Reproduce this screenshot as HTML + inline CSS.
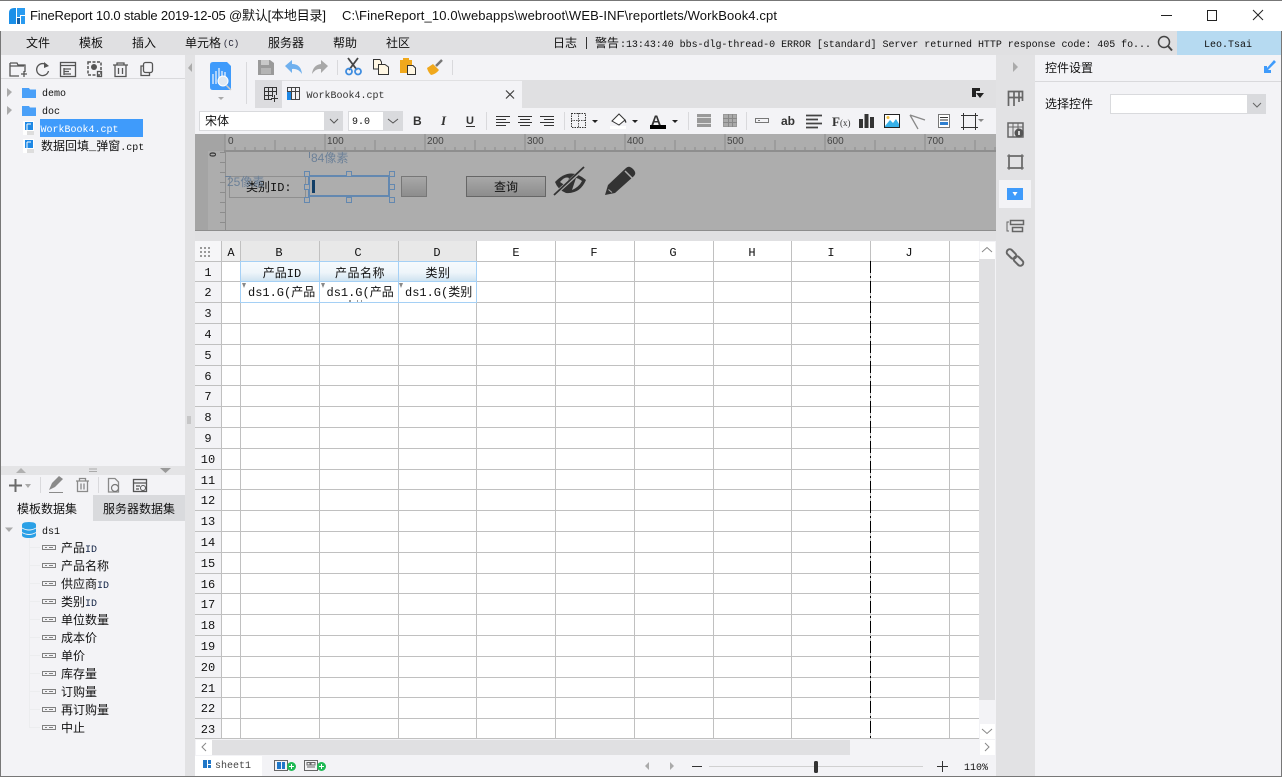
<!DOCTYPE html>
<html><head><meta charset="utf-8">
<style>
html,body{margin:0;padding:0;width:1282px;height:777px;overflow:hidden;background:#fff}
svg{display:block}
text{font-family:"Liberation Sans","Noto Sans CJK SC",sans-serif;font-size:12px;fill:#111}
.m{font-family:"Liberation Mono","Noto Sans CJK SC",monospace}
.c{font-family:"Liberation Mono","WenQuanYi Zen Hei","Noto Sans CJK SC",monospace}
.z{font-family:"WenQuanYi Zen Hei","Noto Sans CJK SC",sans-serif}
.mid{text-anchor:middle}
.ic{fill:none;stroke:#555;stroke-width:1.3}
.ig{fill:none;stroke:#8a8a8a;stroke-width:1.3}
</style></head><body>
<svg width="1282" height="777" viewBox="0 0 1282 777" xmlns="http://www.w3.org/2000/svg">
<defs>
<pattern id="t10" x="224.5" y="134" width="100" height="17" patternUnits="userSpaceOnUse">
<path d="M.5 0V17M50.5 6V17M10.5 13V17M20.5 13V17M30.5 13V17M40.5 13V17M60.5 13V17M70.5 13V17M80.5 13V17M90.5 13V17" stroke="#8c8c8c" stroke-width="1" fill="none"/>
</pattern>
<pattern id="v10" x="208" y="152" width="17" height="10" patternUnits="userSpaceOnUse">
<path d="M12 .5H17" stroke="#8c8c8c" fill="none"/>
</pattern>
<linearGradient id="h1" x1="0" y1="0" x2="0" y2="1"><stop offset="0" stop-color="#f6fafd"/><stop offset=".55" stop-color="#eef5fa"/><stop offset="1" stop-color="#cfe3f0"/></linearGradient>
<linearGradient id="b1" x1="0" y1="0" x2="0" y2="1"><stop offset="0" stop-color="#a9a9a9"/><stop offset="1" stop-color="#8c8c8c"/></linearGradient>
</defs>

<!-- window base -->
<rect width="1282" height="777" fill="#f3f3f6"/>
<rect width="1282" height="31" fill="#fff"/>
<rect width="1282" height="1" fill="#777"/>
<!-- logo -->
<path d="M9 13 Q9 8 14 8H16V24H9Z" fill="#1b8fe8"/>
<path d="M17 8H25V15H20V17H17Z" fill="#2a9bf0"/>
<path d="M17 18H20V24H17Z" fill="#1560a8"/>
<path d="M21 16H25V24H21Z" fill="#2a9bf0"/>
<text x="30" y="20" style="font-size:13px" textLength="296" lengthAdjust="spacing">FineReport 10.0 stable 2019-12-05 @默认[本地目录]</text>
<text x="342" y="20" style="font-size:13px" textLength="435" lengthAdjust="spacing">C:\FineReport_10.0\webapps\webroot\WEB-INF\reportlets/WorkBook4.cpt</text>
<path d="M1161 15.500H1172" stroke="#222" stroke-width="1"/>
<rect x="1207.500" y="10.500" width="9" height="10" fill="none" stroke="#222"/>
<path d="M1253 10L1263 20M1263 10L1253 20" stroke="#222" stroke-width="1"/>

<!-- menu -->
<rect y="31" width="1282" height="24" fill="#e0e0e2"/>
<g class="z">
<text class="z" x="26" y="47">文件</text>
<text class="z" x="79" y="47">模板</text>
<text class="z" x="132" y="47">插入</text>
<text class="z" x="185" y="47">单元格</text>
<text class="m" x="223" y="46" style="font-size:9px;fill:#223">(C)</text>
<text class="z" x="268" y="47">服务器</text>
<text class="z" x="333" y="47">帮助</text>
<text class="z" x="386" y="47">社区</text>
<text class="z" x="553" y="47">日志</text>
<path d="M586.500 37V49" stroke="#333"/>
<text class="z" x="595" y="47">警告</text>
<text class="m" x="620" y="47" style="font-size:10px" textLength="531" lengthAdjust="spacing">:13:43:40 bbs-dlg-thread-0 ERROR [standard] Server returned HTTP response code: 405 fo...</text>
</g>
<circle cx="1164" cy="42" r="5.500" fill="none" stroke="#444" stroke-width="1.500"/>
<path d="M1168 46L1172 50.500" stroke="#444" stroke-width="2"/>
<rect x="1177" y="31" width="105" height="24" fill="#b6daf1"/>
<text class="m mid" x="1228" y="47" style="font-size:10px">Leo.Tsai</text>

<!-- left panel -->
<rect x="0" y="31" width="1" height="746" fill="#777"/>
<rect x="185" y="55" width="10" height="722" fill="#e2e2e4"/>
<path d="M188 68L192 63V72Z" fill="#aaa"/>
<path d="M188 416V424M190 416V424" stroke="#aaa" stroke-width="1"/>
<rect x="1" y="78" width="184" height="1" fill="#d9d9dc"/>
<!-- left toolbar icons -->
<path class="ic" d="M10 63H17L18 65H25V72M10 63V76H19M10 66H24M21 74H27M24 71V77"/>
<path class="ic" d="M47.500 66A6 6 0 1 0 48.500 71" stroke-width="1.700"/><path d="M44 62L49 66L44 68Z" fill="#555"/>
<rect class="ic" x="60.500" y="62.500" width="15" height="14"/><path class="ic" d="M60 65.500H76M64 69H71M64 71.500H69M64 74H71M64 68V75"/>
<rect x="88" y="62" width="13" height="13" fill="none" stroke="#555" stroke-dasharray="3 1.500" stroke-width="1.500"/><circle cx="94" cy="67" r="3" fill="#555"/><rect class="ic" x="97.500" y="71.500" width="4" height="5"/>
<path class="ic" d="M113 65H128M117 65V63H124V65M115 65V76.500H126V65M118.500 68V74M122.500 68V74"/>
<rect class="ic" x="143.500" y="62.500" width="9" height="10" rx="2"/><path class="ic" d="M143 66H141V75.500H149.500V73"/>

<!-- tree -->
<path d="M7 88L12 92L7 97Z" fill="#aaa"/><path d="M7 106L12 110L7 115Z" fill="#aaa"/>
<path d="M22 88H29L30 89.500H36V98H22Z" fill="#4aa0f8"/><path d="M22 106H29L30 107.500H36V116H22Z" fill="#4aa0f8"/>
<text class="m" x="42" y="96" style="font-size:10px">demo</text>
<text class="m" x="42" y="114" style="font-size:10px">doc</text>
<rect x="40" y="119" width="103" height="18" fill="#3f9bfb"/>
<rect x="23" y="121" width="11" height="14" fill="#fff"/><rect x="25" y="122" width="8" height="8" fill="#1e88e5"/><path d="M27 124H31M27 124V130" stroke="#fff"/><rect x="27" y="131" width="7" height="4" fill="#ddd"/>
<rect x="23" y="139" width="11" height="14" fill="#fff"/><rect x="25" y="140" width="8" height="8" fill="#1e88e5"/><path d="M27 142H31M27 142V148" stroke="#fff"/><rect x="27" y="149" width="7" height="4" fill="#ddd"/>
<text class="m" x="40.500" y="132" style="font-size:10px;fill:#fff">WorkBook4.cpt</text>
<text class="c" x="41" y="150">数据回填_弹窗<tspan style="font-size:10px">.cpt</tspan></text>

<!-- left lower -->
<rect x="1" y="466" width="184" height="9" fill="#e4e4e6"/>
<path d="M16 473L21 468L26 473Z" fill="#b0b0b0"/><path d="M160 468H171L165.500 473Z" fill="#999"/>
<path d="M89 469H97M89 471.500H97" stroke="#aaa"/>
<path d="M9 485.500H22M15.500 479V492" stroke="#6a6a6a" stroke-width="2"/><path d="M25 484H31L28 488Z" fill="#aaa"/>
<path d="M40.500 477V493M98.500 477V493" stroke="#d9d9dc"/>
<path d="M49 490L52 483L59 476L63 479L55 487Z" fill="#8a8a8a"/><path d="M49 492.500H63" stroke="#8a8a8a"/>
<path class="ig" d="M76 481H89M79.500 481V478.500H85.500V481M77.500 481V491.500H87.500V481M81 483.500V489.500M84 483.500V489.500"/>
<path class="ig" d="M108.500 492V478.500H115L118.500 482V492Z"/><circle cx="115" cy="488" r="3.500" fill="#f3f3f6" stroke="#777" stroke-width="1.200"/>
<rect class="ic" x="133.500" y="479.500" width="13" height="12"/><path class="ic" d="M133 483H146M136 486H140M136 489H139"/><circle cx="143" cy="488" r="2.500" fill="none" stroke="#555"/>
<rect x="1" y="495" width="184" height="26" fill="#f3f3f6"/>
<rect x="93" y="495" width="92" height="26" fill="#d9dadd"/>
<text class="z" x="17" y="513">模板数据集</text>
<text class="z" x="103" y="513">服务器数据集</text>
<path d="M5 527.500H13L9 532Z" fill="#aaa"/>
<path d="M22 525Q22 522 29 522Q36 522 36 525V535Q36 538 29 538Q22 538 22 535Z" fill="#2aa0e6"/>
<path d="M22 528Q29 532 36 528M22 532.500Q29 536.500 36 532.500" stroke="#f3f3f6" fill="none"/>
<text class="m" x="42" y="534" style="font-size:10px">ds1</text>
<g fill="none" stroke="#ecedef"><path d="M29.500 538V728M29 547.500H40M29 565.500H40M29 583.500H40M29 601.500H40M29 619.500H40M29 637.500H40M29 655.500H40M29 673.500H40M29 691.500H40M29 709.500H40M29 727.500H40"/></g>
<g fill="none" stroke="#808080">
<rect x="42.500" y="545.500" width="13" height="4"/><rect x="42.500" y="563.500" width="13" height="4"/><rect x="42.500" y="581.500" width="13" height="4"/><rect x="42.500" y="599.500" width="13" height="4"/><rect x="42.500" y="617.500" width="13" height="4"/><rect x="42.500" y="635.500" width="13" height="4"/><rect x="42.500" y="653.500" width="13" height="4"/><rect x="42.500" y="671.500" width="13" height="4"/><rect x="42.500" y="689.500" width="13" height="4"/><rect x="42.500" y="707.500" width="13" height="4"/><rect x="42.500" y="725.500" width="13" height="4"/>
<path d="M45 547.500H47M49 547.500H53M45 565.500H47M49 565.500H53M45 583.500H47M49 583.500H53M45 601.500H47M49 601.500H53M45 619.500H47M49 619.500H53M45 637.500H47M49 637.500H53M45 655.500H47M49 655.500H53M45 673.500H47M49 673.500H53M45 691.500H47M49 691.500H53M45 709.500H47M49 709.500H53M45 727.500H47M49 727.500H53"/>
</g>
<text class="z" x="61" y="552">产品<tspan style="font-family:'Liberation Mono';font-size:10px;fill:#124">ID</tspan></text>
<text class="z" x="61" y="570">产品名称</text>
<text class="z" x="61" y="588">供应商<tspan style="font-family:'Liberation Mono';font-size:10px;fill:#124">ID</tspan></text>
<text class="z" x="61" y="606">类别<tspan style="font-family:'Liberation Mono';font-size:10px;fill:#124">ID</tspan></text>
<text class="z" x="61" y="624">单位数量</text>
<text class="z" x="61" y="642">成本价</text>
<text class="z" x="61" y="660">单价</text>
<text class="z" x="61" y="678">库存量</text>
<text class="z" x="61" y="696">订购量</text>
<text class="z" x="61" y="714">再订购量</text>
<text class="z" x="61" y="732">中止</text>

<!-- main toolbar -->
<rect x="195" y="55" width="801" height="25" fill="#f3f3f6"/>
<path d="M210 65Q210 62 213 62H227L231 66V90H213Q210 90 210 87Z" fill="#3f9bfb"/>
<path d="M213 74V84M216 71V84M219 68V84M222 71V78M225 72V78" stroke="#e6f1fd" stroke-width="1.300"/>
<circle cx="223" cy="81" r="5" fill="#dfe9f2" stroke="#fff"/><path d="M226 85L231 90" stroke="#ccc" stroke-width="1.500"/>
<path d="M218 97H224L221 100Z" fill="#aaa"/>
<path d="M246.500 62V104" stroke="#d9d9dc"/>
<path d="M258 60H270L274 63V75H258Z" fill="#9a9a9a"/><rect x="261" y="60" width="8" height="5" fill="#c8c8c8"/><rect x="261" y="68" width="10" height="6" fill="#b4b4b4"/>
<path d="M285 66L292 60V64Q301 64 302 74Q298 68 292 69V73Z" fill="#6fb0ee"/>
<path d="M328 66L321 60V64Q313 65 312 74Q316 68 321 69V73Z" fill="#a8a8a8"/>
<path d="M337.500 60V75" stroke="#d9d9dc"/>
<path d="M348 58L357 70M358 58L349 70" stroke="#444" stroke-width="1.800"/>
<circle cx="349" cy="71.500" r="3" fill="none" stroke="#3f8de0" stroke-width="1.800"/><circle cx="358" cy="71.500" r="3" fill="none" stroke="#3f8de0" stroke-width="1.800"/>
<path d="M373.500 59.500H380L381.500 62V69H373.500Z" fill="#fff7e4" stroke="#333"/><path d="M378.500 64.500H385L388.500 67V74.500H378.500Z" fill="#fff7e4" stroke="#333"/>
<rect x="400" y="60" width="12" height="13" fill="#f0a81c"/><rect x="403" y="58" width="6" height="3" fill="#f0a81c"/>
<path d="M407.500 65.500H413L415.500 68V74.500H407.500Z" fill="#fff7e4" stroke="#333"/>
<path d="M427 68L433 64L439 70Q436 74 431 75Q428 72 427 68Z" fill="#f0a81c"/><path d="M436 66L442 60" stroke="#777" stroke-width="2.500"/>
<path d="M452.500 60V75" stroke="#d9d9dc"/>

<!-- tab row -->
<rect x="255" y="80" width="741" height="28" fill="#e0e0e2"/>
<rect x="255" y="80" width="27" height="28" fill="#dcdcdf"/>
<rect x="282" y="81" width="240" height="27" fill="#f3f3f6"/>
<path d="M264.500 87.500H277M264.500 87.500V99.500H272M264.500 91.500H277M264.500 95.500H272M268.500 87.500V99.500M272.500 87.500V97M276.500 87.500V95M271 98.500H278M274.500 95V102" stroke="#333" fill="none"/>
<rect x="287.500" y="87.500" width="12" height="12" fill="none" stroke="#444"/><path d="M287 91.500H300M291.500 87V100M295.500 87V100" stroke="#444"/><rect x="287" y="92" width="4" height="8" fill="#1e88e5"/>
<text class="m" x="306.500" y="98" style="font-size:10px;fill:#333">WorkBook4.cpt</text>
<path d="M506 90.500L514 98.500M514 90.500L506 98.500" stroke="#444" stroke-width="1.200"/>
<path d="M972 88H980V91H976V97H972Z" fill="#222"/><path d="M976 93H984L980 98Z" fill="#222"/>

<!-- format row -->
<rect x="195" y="108" width="801" height="26" fill="#f3f3f6"/>
<rect x="199" y="111" width="144" height="20" fill="#d9dadd"/><rect x="200" y="112" width="124" height="18" fill="#fff"/>
<text class="c" x="205" y="125">宋体</text>
<path d="M330 119L334 123L338 119" fill="none" stroke="#555"/>
<rect x="348" y="111" width="55" height="20" fill="#d9dadd"/><rect x="349" y="112" width="34" height="18" fill="#fff"/>
<text class="m" x="352" y="124" style="font-size:10px">9.0</text>
<path d="M388 119L393 123L398 119" fill="none" stroke="#555"/>
<text x="413" y="125" style="font-weight:bold;font-size:12px;fill:#333">B</text>
<text x="441" y="125" style="font-family:'Liberation Serif';font-style:italic;font-weight:bold;font-size:13px;fill:#333">I</text>
<text x="466" y="124" style="font-weight:bold;font-size:11px;fill:#333">U</text><path d="M466 126.500H475" stroke="#333"/>
<path d="M486.500 112V130" stroke="#d9d9dc"/>
<path d="M496 116.500H510M496 119.500H506M496 122.500H510M496 125.500H506M518 116.500H532M520 119.500H530M518 122.500H532M520 125.500H530M540 116.500H554M544 119.500H554M540 122.500H554M544 125.500H554" stroke="#333"/>
<path d="M564.500 112V130" stroke="#d9d9dc"/>
<rect x="571.500" y="113.500" width="14" height="14" fill="none" stroke="#333" stroke-dasharray="1.500 1"/><path d="M578.500 113V128M571 120.500H586" stroke="#555" stroke-dasharray="1.500 1"/>
<path d="M592 120H598L595 123Z" fill="#222"/>
<path d="M612 121L619 114L625 120L619 125Z" fill="#fff" stroke="#333"/><path d="M625 119Q627 122 626 123Q624 122 625 119Z" fill="#333"/><rect x="610" y="126" width="16" height="3" fill="#fff"/>
<path d="M632 120H638L635 123Z" fill="#222"/>
<text x="651" y="125" style="font-weight:bold;font-size:14px;fill:#333">A</text><rect x="650" y="125" width="16" height="4" fill="#000"/>
<path d="M672 120H678L675 123Z" fill="#222"/>
<path d="M688.500 112V130" stroke="#d9d9dc"/>
<rect x="697.500" y="114.500" width="13" height="12" fill="#999" stroke="#999"/><path d="M697 117.500H711M697 123.500H711" stroke="#e0e0e0"/>
<rect x="723.500" y="114.500" width="13" height="12" fill="#aaa" stroke="#999"/><path d="M723 118.500H737M723 122.500H737M728.500 114V127M732.500 114V127" stroke="#888"/>
<path d="M746.500 112V130" stroke="#d9d9dc"/>
<rect x="755.500" y="118.500" width="13" height="4" fill="none" stroke="#777"/><path d="M758 120.500H760" stroke="#777"/>
<text x="781" y="125" style="font-weight:bold;font-size:12px;fill:#333">ab</text>
<path d="M806 115.500H822M806 119.500H818M806 123.500H822M806 127.500H818" stroke="#444" stroke-width="1.700"/>
<text x="832" y="126" style="font-family:'Liberation Serif';font-weight:bold;font-size:13px;fill:#333">F<tspan style="font-size:9px;font-weight:normal">(x)</tspan></text>
<path d="M859 119H863V128H859ZM864.500 114H868.500V128H864.500ZM870 117H874V128H870Z" fill="#333"/>
<rect x="884.500" y="114.500" width="15" height="13" fill="#fff" stroke="#222"/><path d="M885 126L890 120L893 123L896 119L899 124V127H885Z" fill="#37b0e8"/><circle cx="888" cy="117.500" r="1.500" fill="#f0c040"/>
<path d="M910 115L925 120M910 115L918 129" stroke="#888" stroke-width="1.300" fill="none"/>
<rect x="938.500" y="114.500" width="11" height="13" fill="#fff" stroke="#777"/><path d="M940 117.500H948M940 120H948" stroke="#333"/><rect x="940" y="122" width="8" height="3" fill="#2f7fd0"/>
<rect x="963.500" y="115.500" width="12" height="12" fill="none" stroke="#333"/><path d="M963.500 113V130M975.500 113V130M961 115.500H978M961 127.500H978" stroke="#333"/>
<path d="M978 119H984L981 122Z" fill="#888"/>

<!-- ruler + form area -->
<rect x="195" y="134" width="801" height="97" fill="#adadad"/>
<rect x="195" y="151" width="13" height="80" fill="#a4a4a4"/>
<rect x="195" y="134" width="30" height="17" fill="#a4a4a4"/>
<rect x="224" y="134" width="772" height="17" fill="url(#t10)"/>
<rect x="224" y="150" width="772" height="2" fill="#8e8e8e"/>
<rect x="208" y="152" width="17" height="79" fill="url(#v10)"/>
<rect x="225" y="150" width="1" height="81" fill="#8e8e8e"/>
<rect x="195" y="230" width="801" height="1" fill="#8e8e8e"/>
<g style="font-size:10px">
<text x="228" y="144" style="font-size:10px;fill:#444">0</text>
<text x="327" y="144" style="font-size:10px;fill:#444">100</text>
<text x="427" y="144" style="font-size:10px;fill:#444">200</text>
<text x="527" y="144" style="font-size:10px;fill:#444">300</text>
<text x="627" y="144" style="font-size:10px;fill:#444">400</text>
<text x="727" y="144" style="font-size:10px;fill:#444">500</text>
<text x="827" y="144" style="font-size:10px;fill:#444">600</text>
<text x="927" y="144" style="font-size:10px;fill:#444">700</text>
</g>
<text x="0" y="0" transform="translate(216 152) rotate(-90)" style="font-size:9px;fill:#333" text-anchor="end" font-weight="bold">0</text>
<rect x="229.500" y="176.500" width="76" height="21" fill="none" stroke="#8f8f8f"/>
<text class="c" x="246" y="191" style="font-size:12px">类别ID:</text>
<text x="311" y="162" style="font-size:12px;fill:#6d8198">84像素</text>
<path d="M309.500 152V158" stroke="#6d8198"/>
<text x="227" y="186" style="font-size:12px;fill:#6d8198">25像素</text>
<path d="M225 176.500H231" stroke="#6d8198"/>
<rect x="309" y="176" width="80" height="20" fill="none" stroke="#6388b0" stroke-width="2"/>
<g fill="#adadad" stroke="#6388b0"><rect x="304.500" y="171.500" width="5" height="5"/><rect x="346.500" y="171.500" width="5" height="5"/><rect x="389.500" y="171.500" width="5" height="5"/><rect x="304.500" y="184.500" width="5" height="5"/><rect x="389.500" y="184.500" width="5" height="5"/><rect x="304.500" y="197.500" width="5" height="5"/><rect x="346.500" y="197.500" width="5" height="5"/><rect x="389.500" y="197.500" width="5" height="5"/></g>
<rect x="312" y="180" width="3" height="13" fill="#123e66"/>
<rect x="401.500" y="176.500" width="25" height="20" fill="url(#b1)" stroke="#777"/>
<rect x="466.500" y="176.500" width="79" height="20" fill="url(#b1)" stroke="#666"/>
<text class="c mid" x="506" y="191">查询</text>
<path d="M555 182Q570 166 586 180Q580 194 566 193Q558 190 555 182Z" fill="#333"/>
<path d="M560 182Q565 176 569 178L566 186Z" fill="#adadad"/>
<path d="M572 190Q579 187 582 181Q578 178 576 178Z" fill="#adadad"/>
<path d="M554 195L584 168" stroke="#adadad" stroke-width="3.500"/><path d="M554 195L584 167" stroke="#333" stroke-width="1.800"/>
<path d="M605 195L608 185L626 168Q629 165 633 169Q637 173 634 176L615 193Z" fill="#333"/><path d="M625 171L632 178" stroke="#adadad" stroke-width="1.500"/><path d="M608.500 189.500L612 192.500" stroke="#adadad"/>

<rect x="195" y="231" width="801" height="10" fill="#e0e0e2"/>

<!-- grid -->
<rect x="195" y="241" width="785" height="498" fill="#fff"/>
<rect x="195" y="241" width="27" height="498" fill="#f3f3f6"/>
<rect x="195" y="241" width="27" height="20" fill="#f6f6f8"/>
<rect x="222" y="241" width="19" height="20" fill="#efefef"/>
<rect x="241" y="241" width="236" height="20" fill="#e8e8e8"/>
<g fill="#999"><rect x="200" y="247" width="2" height="2"/><rect x="204" y="247" width="2" height="2"/><rect x="208" y="247" width="2" height="2"/><rect x="200" y="251" width="2" height="2"/><rect x="204" y="251" width="2" height="2"/><rect x="208" y="251" width="2" height="2"/><rect x="200" y="255" width="2" height="2"/><rect x="204" y="255" width="2" height="2"/><rect x="208" y="255" width="2" height="2"/></g>
<rect x="241" y="262" width="236" height="19" fill="url(#h1)"/>
<g stroke="#c0c0c0" stroke-width="1" shape-rendering="crispEdges" fill="none">
<path d="M195 261.500H979M195 281.500H979M195 302.500H979M195 323.500H979M195 344.500H979M195 365.500H979M195 385.500H979M195 406.500H979M195 427.500H979M195 448.500H979M195 469.500H979M195 489.500H979M195 510.500H979M195 531.500H979M195 552.500H979M195 573.500H979M195 593.500H979M195 614.500H979M195 635.500H979M195 656.500H979M195 677.500H979M195 697.500H979M195 718.500H979M195 738.500H979"/>
<path d="M221.500 241V739M240.500 241V739M319.500 241V739M398.500 241V739M476.500 241V739M555.500 241V739M634.500 241V739M713.500 241V739M791.500 241V739M870.500 241V739M949.500 241V739"/>
</g>
<path d="M870.500 261V739" stroke="#000" stroke-dasharray="12 3 2 3" shape-rendering="crispEdges"/>
<g stroke="#a5d0f5" stroke-width="1" fill="none" shape-rendering="crispEdges">
<path d="M240.500 261.500H476.500M240.500 281.500H476.500M240.500 302.500H476.500M240.500 261V303M319.500 261V303M398.500 261V303M476.500 261V303"/>
</g>
<g class="c" style="font-size:11px">
<text class="c mid" x="231" y="256">A</text><text class="c mid" x="279" y="256">B</text><text class="c mid" x="358" y="256">C</text><text class="c mid" x="437" y="256">D</text><text class="c mid" x="516" y="256">E</text><text class="c mid" x="594" y="256">F</text><text class="c mid" x="673" y="256">G</text><text class="c mid" x="752" y="256">H</text><text class="c mid" x="831" y="256">I</text><text class="c mid" x="909" y="256">J</text>
<text class="c mid" x="208" y="276">1</text><text class="c mid" x="208" y="296">2</text><text class="c mid" x="208" y="317">3</text><text class="c mid" x="208" y="338">4</text><text class="c mid" x="208" y="359">5</text><text class="c mid" x="208" y="380">6</text><text class="c mid" x="208" y="400">7</text><text class="c mid" x="208" y="421">8</text><text class="c mid" x="208" y="442">9</text><text class="c mid" x="208" y="463">10</text><text class="c mid" x="208" y="484">11</text><text class="c mid" x="208" y="504">12</text><text class="c mid" x="208" y="525">13</text><text class="c mid" x="208" y="546">14</text><text class="c mid" x="208" y="567">15</text><text class="c mid" x="208" y="588">16</text><text class="c mid" x="208" y="608">17</text><text class="c mid" x="208" y="629">18</text><text class="c mid" x="208" y="650">19</text><text class="c mid" x="208" y="671">20</text><text class="c mid" x="208" y="692">21</text><text class="c mid" x="208" y="712">22</text><text class="c mid" x="208" y="733">23</text>
</g>
<text class="c mid" x="282" y="277">产品ID</text>
<text class="c mid" x="360" y="277" style="letter-spacing:.5px">产品名称</text>
<text class="c mid" x="438" y="277" style="letter-spacing:.5px">类别</text>
<path d="M242 283L244 288L246 283ZM321 283L323 288L325 283ZM399 283L401 288L403 283Z" fill="#888"/>
<text class="c" x="248" y="296" style="font-size:12px">ds1.G(产品</text>
<text class="c" x="326.500" y="296" style="font-size:12px">ds1.G(产品</text>
<text class="c" x="405" y="296" style="font-size:12px">ds1.G(类别</text>
<path d="M349 301H351M357 301H358M361 301H362" stroke="#333"/>

<!-- scrollbars -->
<rect x="979" y="241" width="17" height="498" fill="#f3f3f6"/>
<rect x="979" y="259" width="16" height="441" fill="#e0e0e2"/>
<rect x="980" y="242" width="15" height="17" fill="#fff"/>
<path d="M982 252L987 247.500L992 252" fill="none" stroke="#888"/>
<rect x="980" y="724" width="15" height="15" fill="#fff"/>
<path d="M982 729L987 733.500L992 729" fill="none" stroke="#888"/>
<rect x="195" y="739" width="801" height="17" fill="#f3f3f6"/>
<rect x="212" y="740" width="638" height="15" fill="#e0e0e2"/>
<rect x="196" y="740" width="16" height="15" fill="#fff"/>
<path d="M206 743L202 747L206 751" fill="none" stroke="#888"/>
<rect x="980" y="740" width="15" height="15" fill="#fff"/>
<path d="M985 743L989 747L985 751" fill="none" stroke="#888"/>

<!-- sheet bar -->
<rect x="195" y="756" width="801" height="21" fill="#f3f3f6"/>
<rect x="195" y="756" width="67" height="20" fill="#fff"/>
<path d="M203 760H207V768H203ZM208 760H211V764H208ZM208 765H211V768H208Z" fill="#1f77c8"/>
<text class="m" x="215" y="768" style="font-size:10px;fill:#444">sheet1</text>
<rect x="274.500" y="760.500" width="13" height="10" fill="none" stroke="#666"/><path d="M277 762H281V769H277ZM282 762H285V769H282Z" fill="#1f77c8"/>
<circle cx="291.500" cy="766.500" r="4.500" fill="#1fb954"/><path d="M289 766.500H294M291.500 764V769" stroke="#fff"/>
<rect x="304.500" y="760.500" width="13" height="10" fill="none" stroke="#666"/><path d="M307 762.500H310V765H307ZM311 762.500H315V765H311ZM307 767H315" stroke="#666" fill="none"/>
<circle cx="321.500" cy="766.500" r="4.500" fill="#1fb954"/><path d="M319 766.500H324M321.500 764V769" stroke="#fff"/>
<path d="M649 762L645 766L649 770Z" fill="#aaa"/><path d="M670 762L674 766L670 770Z" fill="#aaa"/>
<path d="M692 766.500H702" stroke="#333"/>
<rect x="709" y="766" width="214" height="1" fill="#d0d0d0"/>
<rect x="814" y="761" width="4" height="12" rx="1.500" fill="#333"/>
<path d="M937 766.500H948M942.500 761V772" stroke="#333"/>
<text class="m" x="964" y="770" style="font-size:10px">110%</text>

<!-- right -->
<rect x="996" y="55" width="39" height="722" fill="#e2e2e4"/>
<rect x="1035" y="55" width="247" height="722" fill="#f3f3f6"/>
<path d="M1013 62L1018 67L1013 72Z" fill="#aaa"/>
<rect x="1035" y="81" width="247" height="1" fill="#d9d9dc"/>
<text class="z" x="1045" y="72">控件设置</text>
<path d="M1264 73H1271V70L1268 70L1276 62L1274 60L1267 68V66H1264Z" fill="#3f9bfb"/>
<text class="z" x="1045" y="108">选择控件</text>
<rect x="1110.500" y="94.500" width="155" height="19" fill="#fff" stroke="#d9dadd"/>
<rect x="1247" y="94" width="19" height="20" fill="#d9dadd"/>
<path d="M1253 103L1257 107L1261 103" fill="none" stroke="#666"/>
<!-- strip icons -->
<path d="M1008.500 106V91.500H1022.500V101M1008.500 97.500H1022.500M1014 92V106M1019 92V102" fill="none" stroke="#666" stroke-width="1.700"/>
<rect x="1008" y="123" width="15" height="14" fill="none" stroke="#666" stroke-width="1.500"/><path d="M1008 127H1023M1013 123V137M1018 123V130" stroke="#666"/><circle cx="1019" cy="133" r="4.500" fill="#555"/><path d="M1019 131V135" stroke="#fff" stroke-width="1.500"/>
<rect x="1009" y="156" width="13" height="12" fill="none" stroke="#666" stroke-width="1.700"/><path d="M1009 154V170M1022 154V170M1007 156H1024M1007 168H1024" stroke="#666"/>
<rect x="999" y="180" width="32" height="28" fill="#f3f3f6"/>
<rect x="1007" y="188" width="16" height="12" fill="#3f9bfb"/>
<path d="M1012.500 192H1017.500L1015 196Z" fill="#fff"/>
<rect x="1010.500" y="220.500" width="13" height="4" fill="none" stroke="#666" stroke-width="1.500"/><rect x="1012.500" y="227.500" width="10" height="4" fill="none" stroke="#666" stroke-width="1.500"/><path d="M1009 222H1007V231H1009" fill="none" stroke="#666"/>
<rect x="1006" y="251" width="11" height="6" rx="3" transform="rotate(45 1011.500 254)" fill="none" stroke="#666" stroke-width="2"/>
<rect x="1013" y="258" width="11" height="6" rx="3" transform="rotate(45 1018.500 261)" fill="none" stroke="#666" stroke-width="2"/>

<rect x="1281" y="31" width="1" height="746" fill="#777"/>
<rect y="776" width="1282" height="1" fill="#777"/>
</svg>
</body></html>
